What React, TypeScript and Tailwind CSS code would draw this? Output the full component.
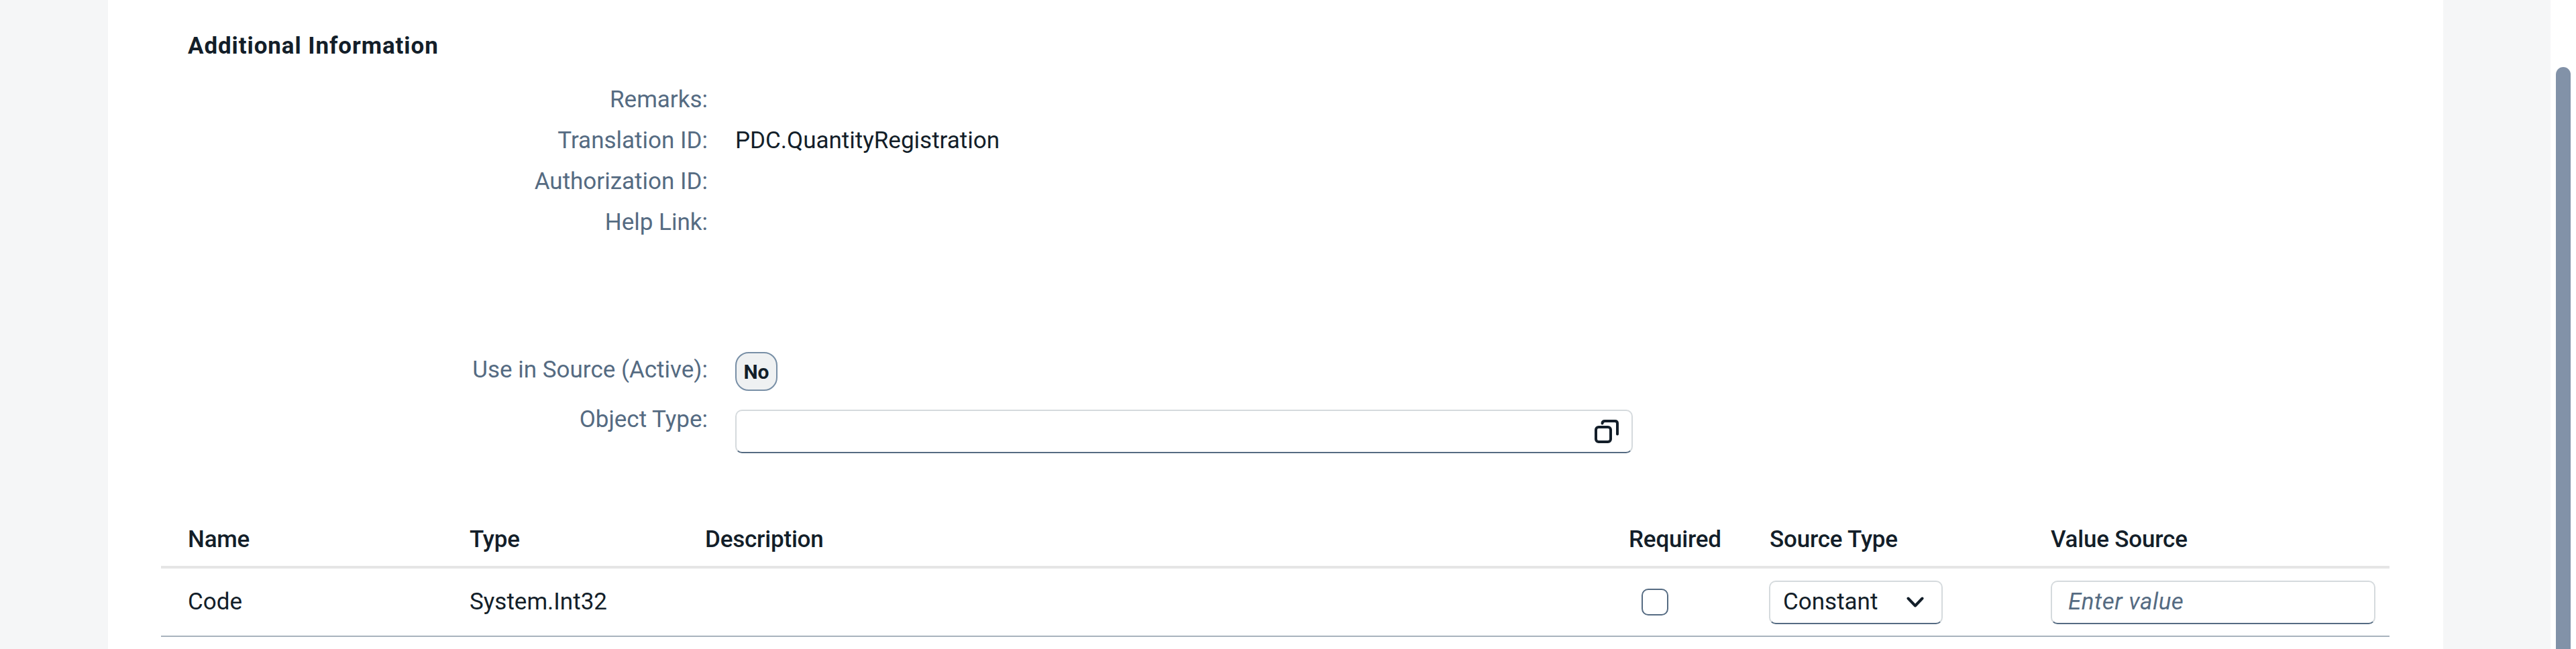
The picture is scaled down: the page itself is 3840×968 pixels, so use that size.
import React from "react";

const labelRow = "flex items-center h-[61px] pt-[2px]";
const label = "w-[894px] shrink-0 text-right text-[#556b82]";
const field = "bg-white rounded-[10px] border-[2.5px] border-[#d5dadd] border-b-[#556b82]";

function ValueHelpIcon() {
  return (
    <svg width="36" height="35" viewBox="0 0 36 35" fill="none" stroke="#131e29" strokeWidth="4" strokeLinecap="round">
      <rect x="2" y="11" width="22" height="22" rx="4" />
      <path d="M11.5 5.5Q11.5 2 15.5 2H30.5Q34 2 34 5.5V21.5" />
    </svg>
  );
}

function Chevron() {
  return (
    <svg width="26" height="16" viewBox="0 0 26 16" fill="none" stroke="#131e29" strokeWidth="4" strokeLinecap="round" strokeLinejoin="round">
      <path d="M2.5 2.5L13 13.5L23.5 2.5" />
    </svg>
  );
}

const grid = "grid grid-cols-[420px_351px_1377px_210px_419px_545px] items-center";

export default function App() {
  return (
    <div className="flex h-[968px] overflow-hidden bg-[#f5f6f7] text-[35px] text-[#131e29] font-['Roboto','Noto_Sans',sans-serif]">
      <div className="w-[161px] shrink-0" />
      <main className="flex-1 bg-white pl-[79px] pr-[80px]">
        <h2 className="pl-[40px] h-[118px] pt-[43px] leading-[52px] font-bold text-[35px] tracking-[0.9px]">Additional Information</h2>
        <div className="-ml-[79px]">
          <div className={labelRow}><span className={label}>Remarks:</span></div>
          <div className={labelRow}>
            <span className={label}>Translation ID:</span>
            <span className="ml-[41px]">PDC.QuantityRegistration</span>
          </div>
          <div className={labelRow}><span className={label}>Authorization ID:</span></div>
          <div className={labelRow}><span className={label}>Help Link:</span></div>

          <div className="flex items-center h-[58px] mt-[163px]">
            <span className={`${label} pb-[3px]`}>Use in Source (Active):</span>
            <span className="ml-[41px] flex items-center justify-center w-[63px] h-[58px] rounded-[20px] border-[2.5px] border-[#788fa6] bg-[#eff1f2] font-bold text-[30px]">No</span>
          </div>
          <div className="flex items-start h-[65px] mt-[28px]">
            <span className={`${label} leading-[29px]`}>Object Type:</span>
            <div className={`${field} ml-[41px] w-[1338px] h-[65px] flex items-center justify-end pr-[19px]`}>
              <ValueHelpIcon />
            </div>
          </div>
        </div>

        <div className={`${grid} mt-[102px] h-[70px] border-b-[4px] border-[#e5e5e5] font-medium pb-[12px] tracking-[-0.2px]`}>
          <span className="pl-[40px]">Name</span>
          <span className="pl-[40px]">Type</span>
          <span className="pl-[40px]">Description</span>
          <span className="pl-[40px]">Required</span>
          <span className="pl-[40px]">Source Type</span>
          <span className="pl-[40px]">Value Source</span>
        </div>
        <div className={`${grid} h-[102px] border-b-[2.5px] border-[#a8b3bd]`}>
          <span className="pl-[40px]">Code</span>
          <span className="pl-[40px]">System.Int32</span>
          <span />
          <span className="pl-[59px]">
            <span className="block w-[40px] h-[40px] rounded-[10px] border-[2.5px] border-[#556b82] bg-white" />
          </span>
          <span className="pl-[39px]">
            <span className={`${field} w-[259px] h-[65px] flex items-center justify-between pl-[19px] pr-[26px]`}>
              Constant
              <Chevron />
            </span>
          </span>
          <span className="pl-[40px]">
            <span className={`${field} w-[484px] h-[65px] flex items-center pl-[24px] italic text-[#556b82] tracking-[0.5px]`}>Enter value</span>
          </span>
        </div>
      </main>
      <div className="w-[160px] shrink-0" />
      <div className="w-[38px] shrink-0 bg-white pt-[100px] pl-[8px] pr-[8px]">
        <div className="w-[22px] h-full rounded-t-full bg-[#8292a8]" />
      </div>
    </div>
  );
}
